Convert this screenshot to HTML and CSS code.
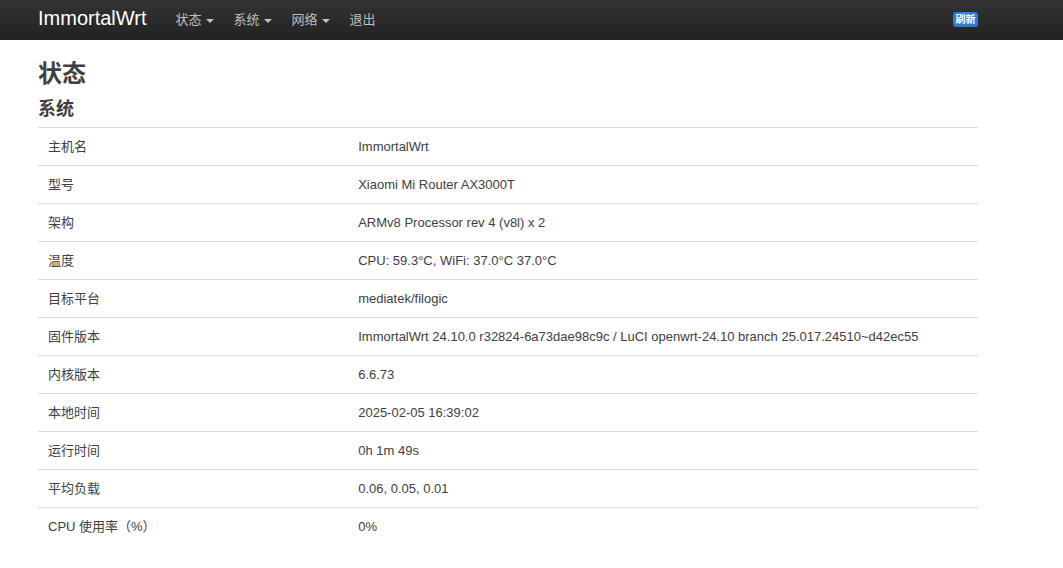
FILE: index.html
```html
<!DOCTYPE html>
<html lang="zh-CN">
<head>
<meta charset="utf-8">
<title>ImmortalWrt - 状态</title>
<link rel="stylesheet" href="styles.css">
</head>
<body>
<header class="navbar">
  <div class="navbar-inner">
    <a class="brand" href="#">ImmortalWrt</a>
    <ul class="nav">
      <li><a href="#">状态<span class="caret"></span></a></li>
      <li><a href="#">系统<span class="caret"></span></a></li>
      <li><a href="#">网络<span class="caret"></span></a></li>
      <li><a href="#">退出</a></li>
    </ul>
    <div class="indicators">
      <span class="badge">刷新</span>
    </div>
  </div>
</header>
<main class="container">
  <h2 class="page-title">状态</h2>
  <h3 class="section-title">系统</h3>
  <table class="table">
    <tbody>
      <tr><td class="key">主机名</td><td>ImmortalWrt</td></tr>
      <tr><td class="key">型号</td><td>Xiaomi Mi Router AX3000T</td></tr>
      <tr><td class="key">架构</td><td>ARMv8 Processor rev 4 (v8l) x 2</td></tr>
      <tr><td class="key">温度</td><td>CPU: 59.3°C, WiFi: 37.0°C 37.0°C</td></tr>
      <tr><td class="key">目标平台</td><td>mediatek/filogic</td></tr>
      <tr><td class="key">固件版本</td><td>ImmortalWrt 24.10.0 r32824-6a73dae98c9c / LuCI openwrt-24.10 branch 25.017.24510~d42ec55</td></tr>
      <tr><td class="key">内核版本</td><td>6.6.73</td></tr>
      <tr><td class="key">本地时间</td><td>2025-02-05 16:39:02</td></tr>
      <tr><td class="key">运行时间</td><td>0h 1m 49s</td></tr>
      <tr><td class="key">平均负载</td><td>0.06, 0.05, 0.01</td></tr>
      <tr><td class="key">CPU 使用率（%）</td><td>0%</td></tr>
    </tbody>
  </table>
</main>
</body>
</html>
```

FILE: styles.css
```css
html, body {
  margin: 0;
  padding: 0;
  background: #fff;
}

body {
  font-family: "Liberation Sans", "Noto Sans CJK SC", sans-serif;
  font-size: 13px;
  line-height: 18px;
  color: #404040;
}

a {
  text-decoration: none;
}

.navbar {
  height: 40px;
  background: linear-gradient(to bottom, #333333, #222222);
}

.navbar-inner {
  display: flex;
  align-items: stretch;
  height: 40px;
  padding-left: 38px;
  width: 940px;
}

.brand {
  font-size: 20px;
  line-height: 36px;
  padding-bottom: 4px;
  color: #ffffff;
  margin-right: 19px;
}

.nav {
  display: flex;
  list-style: none;
  margin: 0;
  padding: 0;
}

.nav li a {
  display: flex;
  align-items: center;
  height: 40px;
  padding: 0 10px;
  color: #bfbfbf;
  font-size: 13px;
}

.caret {
  display: inline-block;
  width: 0;
  height: 0;
  margin-left: 4px;
  margin-top: 1px;
  border-top: 4px solid #bfbfbf;
  border-left: 4px solid transparent;
  border-right: 4px solid transparent;
}

.indicators {
  margin-left: auto;
  display: flex;
  align-items: flex-start;
  padding-top: 12px;
}

.badge {
  display: block;
  background: #2b7ed7;
  color: #ffffff;
  font-size: 10px;
  font-weight: bold;
  line-height: 13px;
  padding: 1px 2.5px;
  border-radius: 3px;
}

.container {
  width: 940px;
  padding-left: 38px;
}

.page-title {
  margin: 16px 0 0;
  font-size: 24px;
  line-height: 36px;
  font-weight: bold;
  color: #404040;
}

.section-title {
  margin: 4px 0 4px;
  font-size: 18px;
  line-height: 27px;
  font-weight: bold;
  color: #404040;
}

.table {
  width: 940px;
  border-collapse: collapse;
  border-spacing: 0;
}

.table td {
  padding: 10px 10px 9px;
  line-height: 18px;
  border-top: 1px solid #dddddd;
  text-align: left;
  vertical-align: top;
}

.table td.key {
  width: 33%;
}
```
